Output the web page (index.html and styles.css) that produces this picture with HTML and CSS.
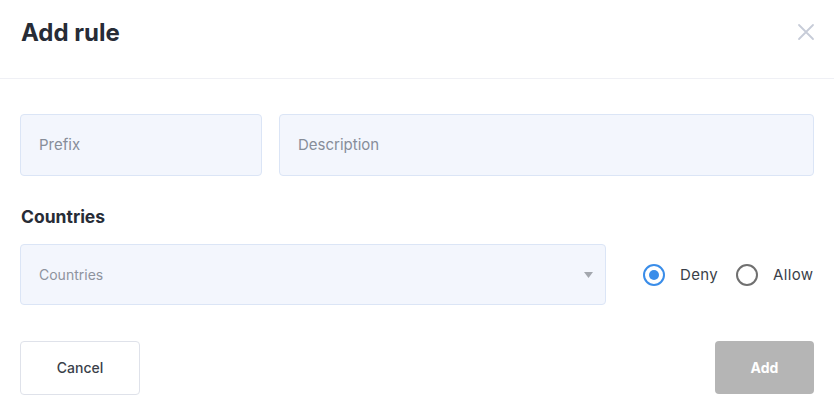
FILE: index.html
```html
<!DOCTYPE html>
<html lang="en">
<head>
<meta charset="utf-8">
<title>Add rule</title>
<link rel="stylesheet" href="styles.css">
</head>
<body>
<div class="modal">
  <header class="modal-header">
    <h1 class="modal-title">Add rule</h1>
    <button class="close-btn" aria-label="Close">
      <svg width="18" height="18" viewBox="0 0 18 18"><path d="M2 2L16 16M16 2L2 16" stroke="#c7ccd8" stroke-width="1.8" stroke-linecap="round"/></svg>
    </button>
  </header>
  <div class="modal-body">
    <div class="row-inputs">
      <div class="field field-prefix">Prefix</div>
      <div class="field field-desc">Description</div>
    </div>
    <h2 class="section-title">Countries</h2>
    <div class="row-countries">
      <div class="field field-select">
        <span>Countries</span>
        <svg class="caret" width="9" height="6" viewBox="0 0 9 6"><path d="M0 0H9L4.5 6Z" fill="#a3a7ae"/></svg>
      </div>
      <div class="radios">
        <label class="radio"><span class="dot dot-on"></span><span class="radio-label">Deny</span></label>
        <label class="radio"><span class="dot"></span><span class="radio-label">Allow</span></label>
      </div>
    </div>
    <div class="row-actions">
      <button class="btn btn-cancel">Cancel</button>
      <button class="btn btn-add">Add</button>
    </div>
  </div>
</div>
</body>
</html>
```
FILE: styles.css
```css
* { box-sizing: border-box; }
html, body { margin: 0; padding: 0; background: #fff; }
body { font-family: Inter, "Noto Sans", sans-serif; color: #2a2f3a; }
.modal { width: 834px; height: 418px; }
.modal-header {
  height: 79px;
  display: flex;
  align-items: center;
  justify-content: space-between;
  padding: 0 19px 14px 21px;
  border-bottom: 1px solid #eff0f5;
}
.modal-title { margin: 0; font-size: 24px; font-weight: 700; color: #272c36; letter-spacing: 0; }
.close-btn { background: none; border: 0; padding: 0; width: 18px; height: 18px; display: flex; }
.modal-body { padding: 35px 20px 0 20px; }
.row-inputs { display: flex; gap: 17px; }
.field {
  height: 62px;
  background: #f3f6fd;
  border: 1px solid #dbe5f6;
  border-radius: 4px;
  display: flex;
  align-items: center;
  padding: 0 18px 2px 18px;
  font-size: 15px;
  color: #878d99;
}
.field-prefix { width: 242px; }
.field-desc { flex: 1; }
.section-title { margin: 30px 0 0 1px; font-size: 17.5px; font-weight: 700; color: #272c36; line-height: 21px; }
.row-countries { display: flex; align-items: center; margin-top: 17px; }
.field-select { width: 586px; height: 61px; justify-content: space-between; font-size: 14px; padding: 0 12px 0 18px; color: #8e939e; }
.caret { margin-top: 1px; }
.radios { display: flex; align-items: center; margin-left: 37px; gap: 18px; }
.radio { display: flex; align-items: center; gap: 15px; font-size: 15px; letter-spacing: 0.35px; color: #3a3f49; }
.dot { width: 22px; height: 22px; border-radius: 50%; border: 2px solid #707070; display: inline-block; position: relative; }
.dot-on { border-color: #3a8de9; }
.dot-on::after { content: ""; position: absolute; left: 4px; top: 4px; width: 10px; height: 10px; border-radius: 50%; background: #3a8de9; }
.row-actions { display: flex; justify-content: space-between; margin-top: 36px; }
.btn { font-family: Inter, "Noto Sans", sans-serif; font-size: 14px; border-radius: 4px; }
.btn-cancel { width: 120px; height: 54px; background: #fff; border: 1px solid #dfe2ea; color: #3a3f4a; font-weight: 500; padding-bottom: 2px; }
.btn-add { width: 99px; height: 53px; background: #b5b5b5; border: 0; color: #fff; font-weight: 700; }
```
